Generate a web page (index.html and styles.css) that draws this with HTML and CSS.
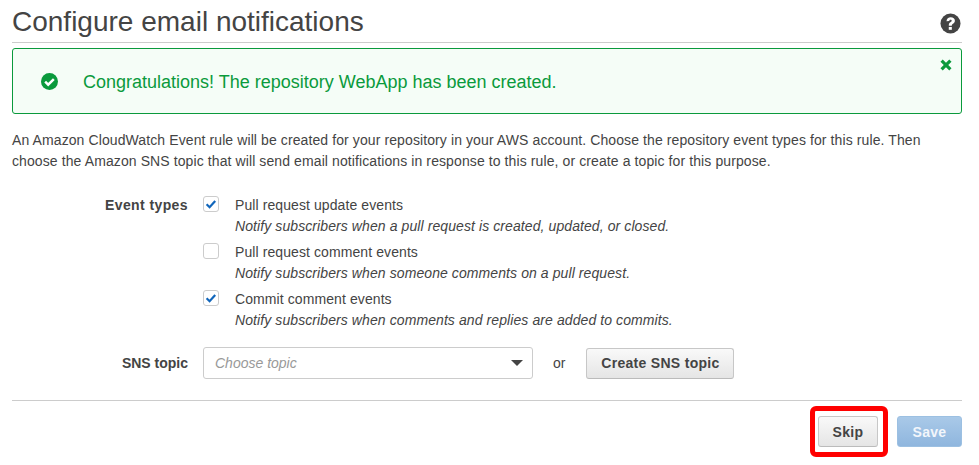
FILE: index.html
```html
<!DOCTYPE html>
<html lang="en">
<head>
<meta charset="utf-8">
<title>Configure email notifications</title>
<link rel="stylesheet" href="styles.css">
</head>
<body>
<main class="page">
  <header class="head">
    <h1 class="title">Configure email notifications</h1>
    <svg class="help" viewBox="0 0 22 22" width="21" height="21" aria-hidden="true">
      <circle cx="11" cy="11" r="10.5" fill="#444"/>
      <path d="M6.8 8.6C7 5.8 8.8 4.4 11.2 4.4c2.6 0 4.4 1.5 4.4 3.7 0 1.6-.9 2.5-2 3.2-.9.6-1.2 1-1.2 2H9.2c0-1.9.5-2.8 1.7-3.6.9-.6 1.4-1 1.4-1.6s-.5-1.1-1.2-1.1c-.8 0-1.3.5-1.4 1.5z" fill="#fff"/>
      <rect x="9.2" y="14.6" width="3.2" height="3" fill="#fff"/>
    </svg>
  </header>

  <section class="alert">
    <svg class="alert-icon" viewBox="0 0 18 18" width="17" height="17" aria-hidden="true">
      <circle cx="9" cy="9" r="9" fill="#0a9a3c"/>
      <path d="M4.4 9.2l3.2 3.2 6-6" fill="none" stroke="#fff" stroke-width="2.6"/>
    </svg>
    <p class="alert-text">Congratulations! The repository WebApp has been created.</p>
    <svg class="alert-close" viewBox="0 0 12 12" width="12" height="12" aria-hidden="true">
      <path d="M1.6 1.6l8.8 8.8M10.4 1.6l-8.8 8.8" stroke="#0a9a3c" stroke-width="3.2" fill="none"/>
    </svg>
  </section>

  <p class="intro">An Amazon CloudWatch Event rule will be created for your repository in your AWS account. Choose the repository event types for this rule. Then<br>choose the Amazon SNS topic that will send email notifications in response to this rule, or create a topic for this purpose.</p>

  <form class="form">
    <div class="row">
      <div class="label label-events">Event types</div>
      <div class="options">
        <div class="option">
          <span class="box"><svg viewBox="0 0 16 16" width="16" height="16" aria-hidden="true"><path d="M3.6 8.2l3 3 5.6-6.2" fill="none" stroke="#1166bb" stroke-width="2.2"/></svg></span>
          <div><div class="opt-title">Pull request update events</div><div class="opt-desc">Notify subscribers when a pull request is created, updated, or closed.</div></div>
        </div>
        <div class="option">
          <span class="box"></span>
          <div><div class="opt-title">Pull request comment events</div><div class="opt-desc">Notify subscribers when someone comments on a pull request.</div></div>
        </div>
        <div class="option">
          <span class="box"><svg viewBox="0 0 16 16" width="16" height="16" aria-hidden="true"><path d="M3.6 8.2l3 3 5.6-6.2" fill="none" stroke="#1166bb" stroke-width="2.2"/></svg></span>
          <div><div class="opt-title">Commit comment events</div><div class="opt-desc">Notify subscribers when comments and replies are added to commits.</div></div>
        </div>
      </div>
    </div>
    <div class="row row-topic">
      <div class="label">SNS topic</div>
      <div class="select"><span>Choose topic</span><i class="caret"></i></div>
      <span class="or">or</span>
      <button type="button" class="btn btn-create">Create SNS topic</button>
    </div>
  </form>

  <footer class="actions">
    <span class="skip-wrap"><button type="button" class="btn btn-skip">Skip</button></span>
    <button type="button" class="btn btn-save">Save</button>
  </footer>
</main>
</body>
</html>
```

FILE: styles.css
```css
* { box-sizing: border-box; }
html, body { margin: 0; padding: 0; }
body { background: #fff; color: #444; font-family: "Liberation Sans", Arial, sans-serif; font-size: 14px; }
.page { width: 950px; margin-left: 12px; height: 465px; overflow: visible; }
.head { height: 43px; border-bottom: 1px solid #ccc; display: flex; justify-content: space-between; align-items: flex-start; }
.title { margin: 5px 0 0; font-size: 28px; line-height: 34px; font-weight: 400; color: #444; }
.help { margin-top: 13px; margin-right: 1px; }
.alert { margin-top: 5px; height: 66px; border: 1px solid #0a9a3c; border-radius: 3px; background: #f5fdf7; display: flex; align-items: center; padding-left: 28px; position: relative; }
.alert-icon { flex: none; margin-right: 25px; }
.alert-text { margin: 2px 0 0; font-size: 18px; color: #0a9a3c; line-height: 24px; }
.alert-close { position: absolute; top: 10px; right: 9px; }
.intro { margin: 16px 0 0; line-height: 21px; color: #444; letter-spacing: 0.1px; }
.form { margin-top: 23px; }
.row { display: flex; }
.label { width: 176px; text-align: right; font-weight: 700; flex: none; }
.label-events { line-height: 20px; letter-spacing: 0.4px; }
.options { margin-left: 15px; display: flex; flex-direction: column; }
.option { display: flex; height: 47px; }
.box { width: 16px; height: 16px; border: 1px solid #ccc; border-radius: 3px; background: #fff; flex: none; margin: 1px 16px 0 0; position: relative; display: block; }
.box svg { position: absolute; left: -1px; top: -1px; display: block; }
.opt-title { line-height: 21px; letter-spacing: 0.09px; }
.opt-desc { line-height: 21px; font-style: italic; letter-spacing: 0.09px; }
.row-topic { align-items: center; margin-top: 11px; }
.select { width: 330px; height: 32px; margin-left: 15px; border: 1px solid #ccc; border-radius: 3px; display: flex; align-items: center; justify-content: space-between; padding: 0 9px 0 11px; font-style: italic; color: #999; }
.caret { border-left: 6px solid transparent; border-right: 6px solid transparent; border-top: 6px solid #444; }
.or { margin: 0 21px 0 20px; }
.btn { font-family: inherit; font-size: 14px; font-weight: 700; height: 31px; padding: 0; border-radius: 3px; letter-spacing: 0.3px; }
.btn-create, .btn-skip { color: #444; border: 1px solid #c7c7c7; border-bottom-color: #bbb; background: linear-gradient(#f9f9f9, #e5e5e5); }
.btn-create { width: 148px; }
.actions { margin-top: 21px; border-top: 1px solid #ccc; display: flex; justify-content: flex-end; align-items: flex-start; padding-top: 15px; }
.skip-wrap { display: block; position: relative; margin-right: 19px; }
.skip-wrap::after { content: ""; position: absolute; left: -8px; right: -10px; top: -10px; bottom: -10px; border: 5px solid #f00; border-radius: 6px; }
.btn-skip { width: 60px; display: block; }
.btn-save { width: 65px; color: #f2f6fb; border: 1px solid #9cc0e2; background: linear-gradient(#a9c9e8, #8fb6de); }
```
